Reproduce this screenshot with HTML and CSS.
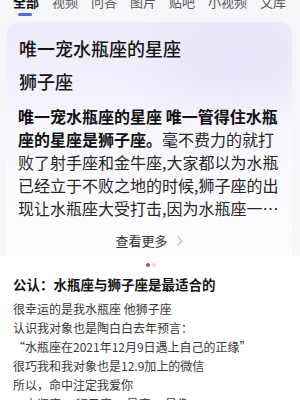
FILE: index.html
```html
<!DOCTYPE html>
<html lang="zh-CN">
<head>
<meta charset="utf-8">
<link rel="stylesheet" href="styles.css">
</head>
<body>
<div class="top">
  <nav class="tabs">
    <div class="tab active"><span class="tab-text">全部</span><span class="bar"></span></div>
    <div class="tab"><span class="tab-text">视频</span></div>
    <div class="tab"><span class="tab-text">问答</span></div>
    <div class="tab"><span class="tab-text">图片</span></div>
    <div class="tab"><span class="tab-text">贴吧</span></div>
    <div class="tab"><span class="tab-text">小视频</span></div>
    <div class="tab"><span class="tab-text">文库</span></div>
    <div class="tab fade"><span class="tab-text">资讯</span></div>
  </nav>
  <div class="card">
    <h1 class="title">唯一宠水瓶座的星座<br>狮子座</h1>
    <p class="answer"><b>唯一宠水瓶座的星座 唯一管得住水瓶座的星座是狮子座。</b>毫不费力的就打败了射手座和金牛座,大家都以为水瓶已经立于不败之地的时候,狮子座的出现让水瓶座大受打击,因为水瓶座一…</p>
    <div class="more">查看更多<svg class="chev" width="6" height="10" viewBox="0 0 6 10"><path d="M1 1l4 4-4 4" fill="none" stroke="#b8b8bc" stroke-width="1.2" stroke-linecap="round" stroke-linejoin="round"/></svg></div>
  </div>
</div>
<div class="dots"><span class="dot on"></span><span class="dot"></span></div>
<section class="post">
  <h2 class="post-title">公认：水瓶座与狮子座是最适合的</h2>
  <p class="post-body">很幸运的是我水瓶座 他狮子座<br>认识我对象也是陶白白去年预言：<br>“水瓶座在2021年12月9日遇上自己的正缘”<br>很巧我和我对象也是12.9加上的微信<br>所以，命中注定我爱你<br>—水瓶座 —狮子座 —星座 —星像</p>
</section>
</body>
</html>
```
FILE: styles.css
```css
html, body {
  margin: 0;
  padding: 0;
}
body {
  width: 300px;
  height: 400px;
  overflow: hidden;
  background: #ffffff;
  font-family: "Noto Sans CJK SC", "Noto Sans", sans-serif;
  color: #222;
}
.top {
  background: #f6f6f8;
  padding: 0 8px 0 7px;
}
.tabs {
  display: flex;
  gap: 13px;
  padding-left: 6px;
  height: 16px;
  overflow: hidden;
  white-space: nowrap;
}
.tab {
  display: flex;
  flex-direction: column;
  align-items: center;
  flex: none;
}
.tab-text {
  font-size: 13px;
  line-height: 13px;
  margin-top: -5px;
  color: #555;
}
.tab.active .tab-text {
  color: #111;
  font-weight: 700;
}
.tab.fade .tab-text {
  color: #d8d8dc;
}
.bar {
  display: block;
  width: 14px;
  height: 3px;
  border-radius: 2px;
  background: #5468e6;
  margin-top: 5px;
  margin-left: -2px;
}
.card {
  margin-top: 6px;
  border-radius: 12px 12px 0 0;
  padding: 10px 12px 5px 11px;
  background:
    radial-gradient(ellipse 120px 70px at 230px 40px, rgba(226, 219, 252, 0.55), rgba(226, 219, 252, 0) 100%),
    linear-gradient(180deg, #eeecfa 0px, #f2f0fc 60px, #f8f7fd 110px, #fcfcfe 170px, #fdfdfe 100%);
}
.title {
  margin: 0;
  font-size: 18px;
  line-height: 33px;
  font-weight: 500;
  color: #161616;
  padding-left: 1px;
}
.answer {
  margin: 7px 0 0;
  font-size: 16px;
  line-height: 23px;
  color: #262626;
  width: 262px;
}
.answer b {
  font-weight: 600;
  color: #111;
}
.more {
  margin-top: 11px;
  height: 20px;
  display: flex;
  justify-content: center;
  align-items: center;
  gap: 9px;
  font-size: 13px;
  line-height: 20px;
  color: #333;
}
.chev {
  display: block;
}
.dots {
  display: flex;
  justify-content: center;
  gap: 2px;
  margin-top: 7px;
  padding-left: 1px;
}
.dot {
  width: 4px;
  height: 4px;
  border-radius: 2px;
  background: #f4d3de;
}
.dot.on {
  background: #e0336a;
}
.post {
  padding: 7px 13px 0;
}
.post-title {
  margin: 0;
  font-size: 13.5px;
  line-height: 20px;
  font-weight: 700;
  color: #151515;
}
.post-body {
  margin: 5px 0 0;
  font-size: 12px;
  line-height: 19px;
  color: #383838;
}
```
